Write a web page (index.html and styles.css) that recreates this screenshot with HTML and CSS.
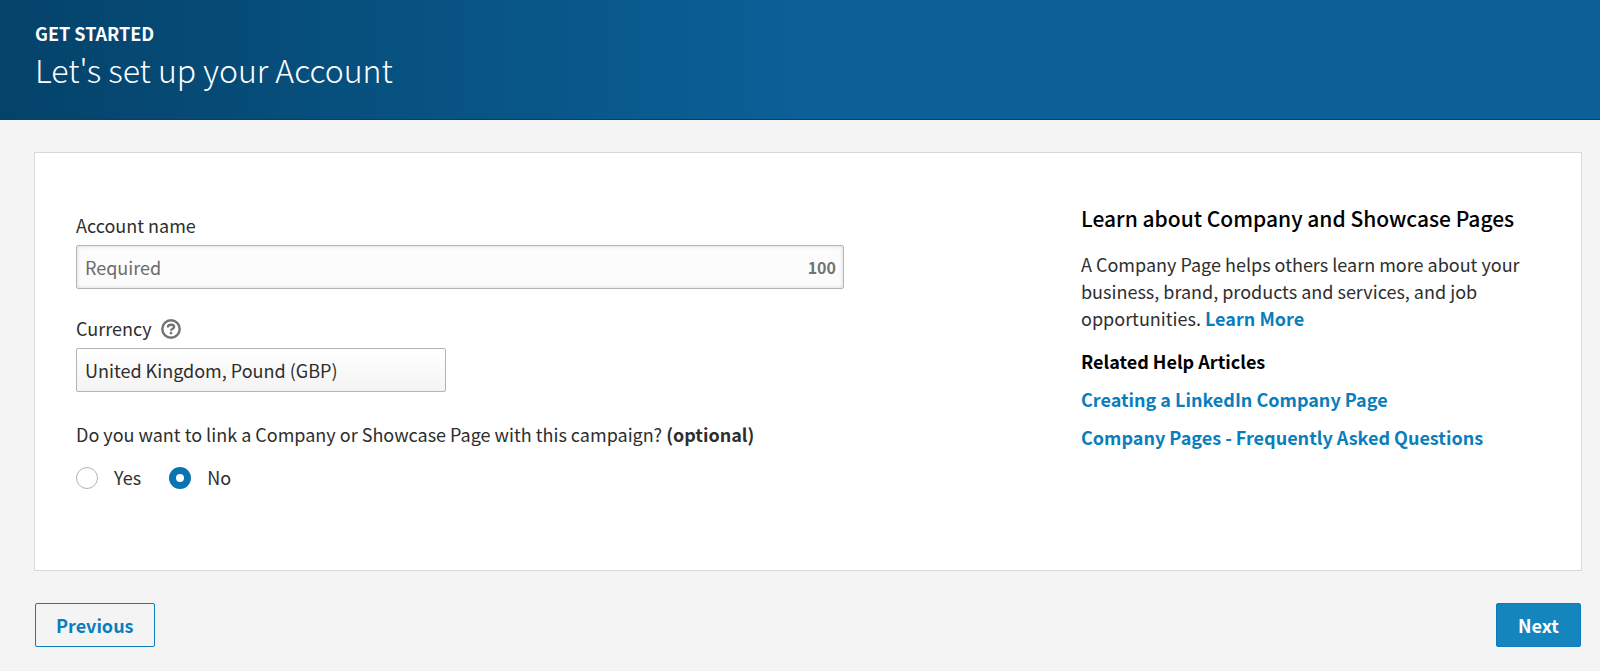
FILE: index.html
```html
<!DOCTYPE html>
<html lang="en">
  <head>
    <meta charset="utf-8" />
    <meta name="viewport" content="width=device-width, initial-scale=1.0" />
    <title>Let's set up your Account</title>
    <link rel="stylesheet" href="styles.css">
  </head>

  <body>
    <header class="header">
      <p class="step">Get started</p>
      <h1 class="title">Let's set up your Account</h1>
    </header>

    <main class="content">
      <div class="card">
        <form class="account-form" id="account-form">
          <div class="field">
            <label class="label" for="account-name">Account name</label>
            <div class="input-wrap">
              <input
                type="text"
                id="account-name"
                name="name"
                class="input"
                placeholder="Required"
                maxlength="100"
              />
              <span class="counter">100</span>
            </div>
          </div>

          <div class="field">
            <div class="label-row">
              <label class="label" for="currency">Currency</label>
              <svg class="help-icon" viewBox="0 0 20 20" aria-hidden="true">
                <circle cx="10" cy="10" r="8.7" />
                <path d="M6.8 8.4C6.8 6.6 8 5.8 10 5.8S13.1 6.6 13.1 8C13.1 9.8 10 9.7 10 11.8" />
                <path d="M10 12.9V15.3" />
              </svg>
            </div>
            <select id="currency" name="currency" class="select">
              <option value="GBP" selected>United Kingdom, Pound (GBP)</option>
            </select>
          </div>

          <fieldset class="link-page">
            <legend class="label">
              Do you want to link a Company or Showcase Page with this campaign?
              <strong>(optional)</strong>
            </legend>
            <div class="radios">
              <label class="radio">
                <input type="radio" name="link" value="yes" />
                Yes
              </label>
              <label class="radio">
                <input type="radio" name="link" value="no" checked />
                No
              </label>
            </div>
          </fieldset>
        </form>

        <aside class="help">
          <h2>Learn about Company and Showcase Pages</h2>
          <p>
            A Company Page helps others learn more about your business, brand,
            products and services, and job opportunities.
            <a href="#">Learn More</a>
          </p>
          <h3>Related Help Articles</h3>
          <ul>
            <li><a href="#">Creating a LinkedIn Company Page</a></li>
            <li><a href="#">Company Pages - Frequently Asked Questions</a></li>
          </ul>
        </aside>
      </div>

      <div class="actions">
        <button type="button" class="btn">Previous</button>
        <button type="submit" form="account-form" class="btn primary">Next</button>
      </div>
    </main>
  </body>
</html>
```

FILE: styles.css
```css
* {
  box-sizing: border-box;
}

body {
  margin: 0;
  background: #f4f4f4;
  color: #2e2e2e;
  font-family: 'Noto Sans CJK SC', 'Open Sans', sans-serif;
  font-size: 18px;
  line-height: 27px;
}

h1,
h2,
h3,
p,
ul {
  margin: 0;
  padding: 0;
}

a {
  color: #0a7dbc;
  font-weight: 700;
  text-decoration: none;
}

a:hover {
  text-decoration: underline;
}

.header {
  padding: 20px 35px 28px;
  background: linear-gradient(to right, #04436a, #0b6097 50%, #0b6097);
  border-bottom: 1px solid #08406a;
  color: #fff;
}

.step {
  font-weight: 700;
  text-transform: uppercase;
}

.title {
  font-size: 32px;
  font-weight: 300;
  line-height: 44px;
}

.content {
  padding: 32px 18px 24px 34px;
}

.card {
  display: flex;
  justify-content: space-between;
  gap: 40px;
  padding: 52px 40px 79px 41px;
  background: #fff;
  border: 1px solid #d8d8d8;
}

.account-form {
  flex: 0 1 768px;
  padding-top: 7px;
}

.field {
  margin-bottom: 26px;
}

.label {
  display: block;
  padding: 0;
}

.label strong {
  font-weight: 700;
}

.label-row {
  display: flex;
  align-items: center;
  gap: 9px;
}

.help-icon {
  width: 20px;
  height: 20px;
  fill: none;
  stroke: #737373;
  stroke-width: 2.4;
}

.input-wrap {
  position: relative;
  margin-top: 6px;
}

.input,
.select {
  display: block;
  height: 44px;
  border: 1px solid #b4b4b4;
  border-radius: 2px;
  color: #2e2e2e;
  font: inherit;
}

.input {
  width: 100%;
  padding: 0 56px 0 8px;
  background: #fcfcfc;
  box-shadow: inset 0 0 4px rgba(0, 0, 0, 0.15);
}

.input::placeholder {
  color: #6b6b6b;
  opacity: 1;
}

.counter {
  position: absolute;
  top: 9px;
  right: 8px;
  color: #737373;
  font-size: 16px;
  font-weight: 700;
}

.select {
  width: 370px;
  max-width: 100%;
  margin-top: 6px;
  padding: 0 8px;
  appearance: none;
  background: linear-gradient(to bottom, #fff, #f4f4f4);
}

.link-page {
  margin: 29px 0 0;
  padding: 0;
  border: none;
}

.radios {
  display: flex;
  gap: 28px;
  margin-top: 16px;
}

.radio {
  display: flex;
  align-items: center;
  gap: 16px;
}

.radio input {
  appearance: none;
  width: 22px;
  height: 22px;
  margin: 0;
  background: #fff;
  border: 1px solid #b4b4b4;
  border-radius: 50%;
}

.radio input:checked {
  border: 7px solid #0a74b0;
}

.help {
  flex: 0 1 460px;
}

.help h2 {
  margin-bottom: 19px;
  color: #000;
  font-size: 21px;
  font-weight: 500;
}

.help h3 {
  margin: 16px 0 11px;
  color: #000;
  font-size: 18px;
  font-weight: 700;
}

.help ul {
  list-style: none;
}

.help li {
  margin-bottom: 11px;
}

.actions {
  display: flex;
  justify-content: space-between;
  padding: 32px 1px 0;
}

.btn {
  min-width: 85px;
  height: 44px;
  padding: 0 20px;
  background: #f4f4f4;
  border: 1px solid #0a7dbc;
  border-radius: 2px;
  color: #0a7dbc;
  font: inherit;
  font-weight: 700;
  cursor: pointer;
}

.btn.primary {
  background: #1485bd;
  color: #fff;
}
```
